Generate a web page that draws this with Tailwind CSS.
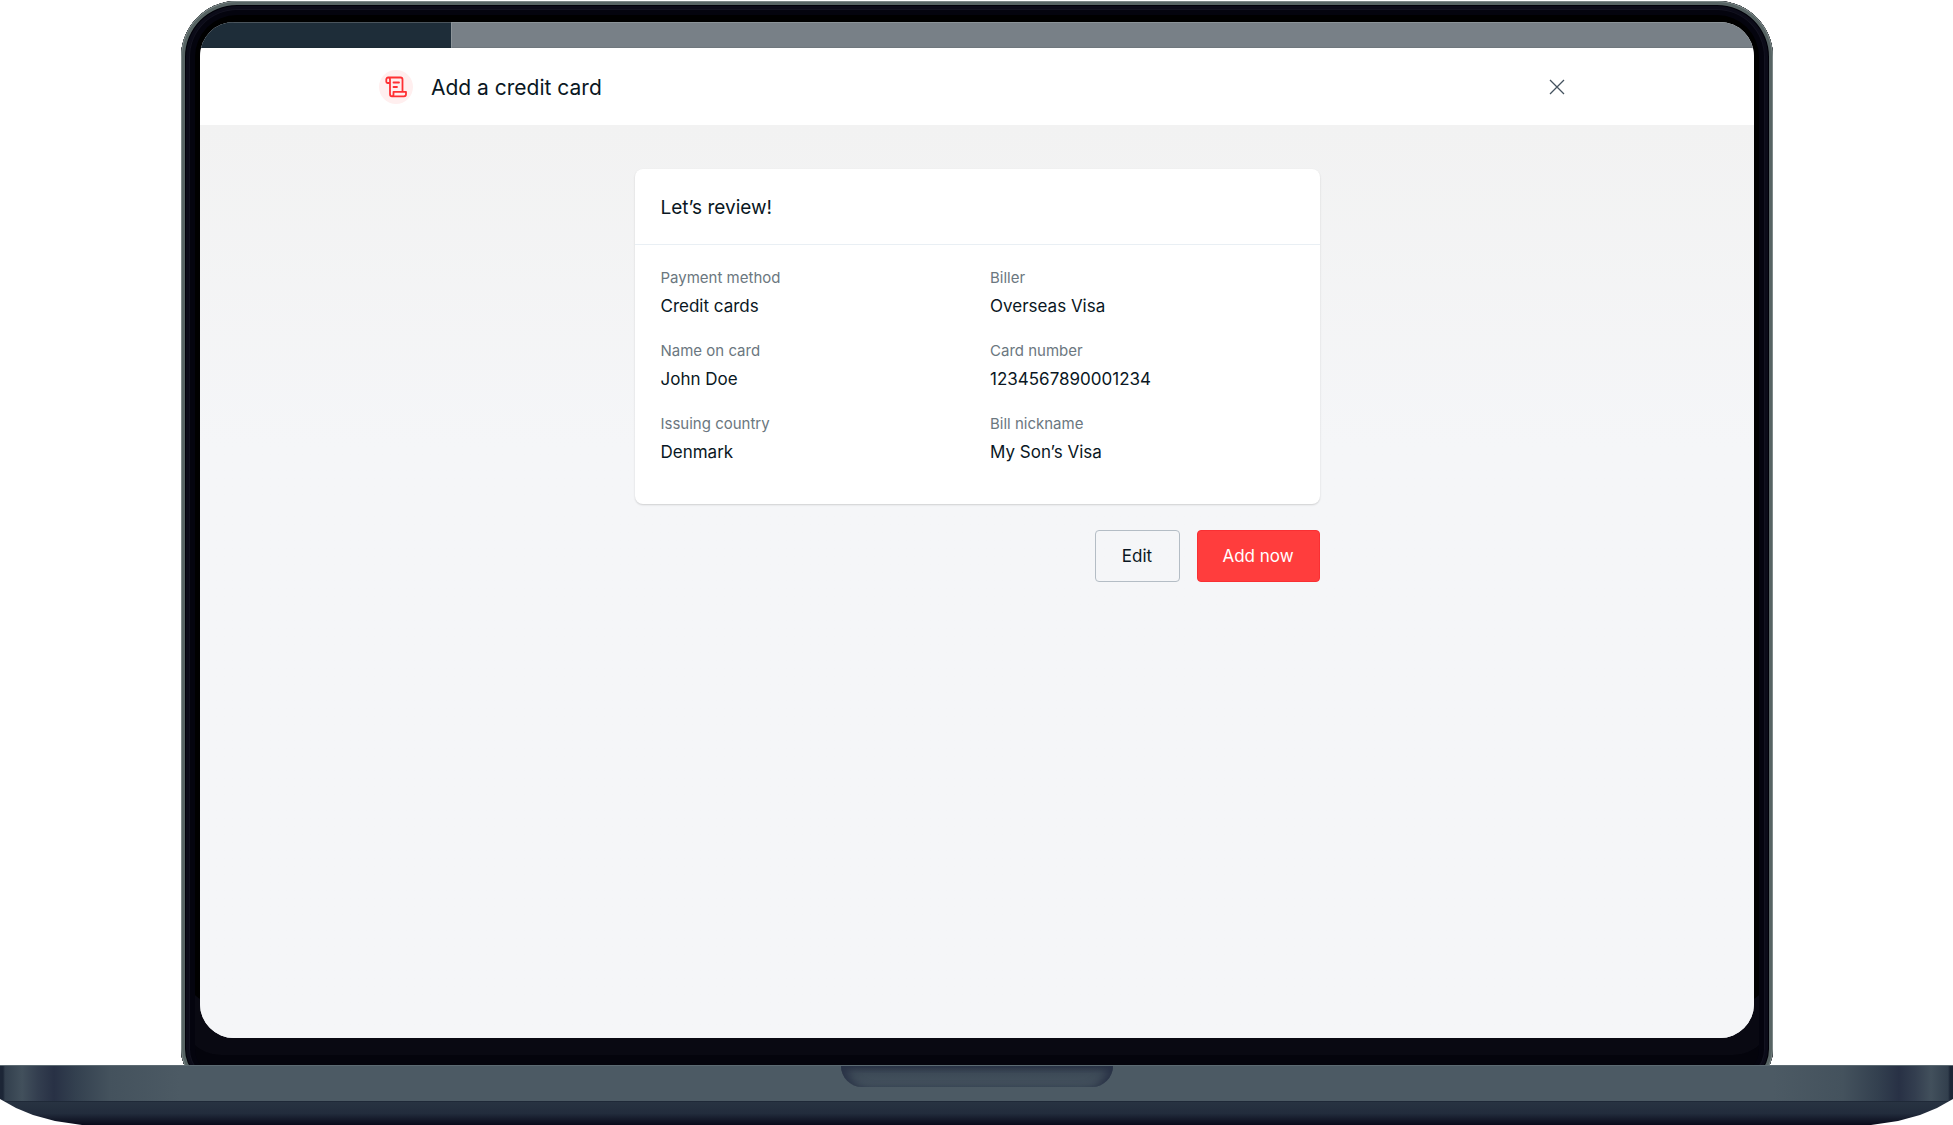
<!DOCTYPE html>
<html lang="en">
<head>
<meta charset="utf-8">
<meta name="viewport" content="width=device-width, initial-scale=1">
<title>Add a credit card</title>
<script src="https://cdn.jsdelivr.net/npm/@tailwindcss/browser@4"></script>
</head>
<body class="flex min-h-screen flex-col bg-white font-['Inter',sans-serif] text-[#0a1723]">
  <!-- Laptop lid; its lower edge is tucked behind the base -->
  <div class="mt-px mr-[180px] ml-[181px] flex flex-1 flex-col rounded-t-[56px] rounded-b-[40px] bg-black px-[19px] pt-[21px] pb-[51px] shadow-[inset_0_0_0_1px_#7d8888,inset_0_0_0_4px_#576464,inset_0_0_0_5px_#000008,inset_0_0_0_8px_#0b0b18,inset_0_0_0_9px_#12121f,inset_0_0_0_14px_#04040e,inset_0_-34px_0_0_#04040c,inset_0_-84px_0_0_#090912]">
    <!-- Screen -->
    <div class="flex flex-1 flex-col overflow-hidden rounded-t-[34px] rounded-b-[34px] bg-[#f5f6f8]">
      <div class="flex h-[26px] bg-[#788087]">
        <div class="w-[251px] border-t border-[#4a545c] bg-[#1e2d39]"></div>
        <div class="flex-1 border-t border-l border-[#8c9499]"></div>
      </div>
      <header class="flex h-[77px] items-center justify-center rounded-t-[4px] bg-white px-6 shadow-[0_1px_3px_#00000026] ring-1 ring-[#0000000a]">
        <div class="flex w-full max-w-[1196px] items-center gap-[18px]">
          <span class="flex size-[34px] items-center justify-center rounded-full bg-[#ffefef]">
            <svg class="size-[22px]" viewBox="0 0 22 22" fill="none" stroke="#ff3033" stroke-width="1.800" stroke-linecap="round" stroke-linejoin="round" aria-hidden="true">
              <path d="M3 1.5H15.500Q17.500 1.500 17.500 3.500V15.500M5 3.500V18Q5 20.300 7 20.300H19Q21 20.300 21 18.300V15.800H8.500V18.300Q8.500 20.300 7 20.300M5 7H2.500Q1.300 7 1.300 5.800V3.500Q1.300 1.500 3.200 1.500Q5 1.500 5 3.500M8.500 6.500H14M8.500 11H12"/>
            </svg>
          </span>
          <h1 class="flex-1 pt-0.5 text-[21px] leading-7">Add a credit card</h1>
          <button type="button" aria-label="Close" class="flex size-9 items-center justify-center">
            <svg class="size-4" viewBox="0 0 16 16" fill="none" stroke="#44525e" stroke-width="1.300" aria-hidden="true"><path d="M1 1L15 15M15 1L1 15"/></svg>
          </button>
        </div>
      </header>
      <main class="flex flex-1 flex-col items-center bg-linear-to-b from-[#f2f2f2] to-[#f5f6f8] to-[320px] px-6 pt-11">
        <section class="w-full max-w-[685px] rounded-lg bg-white shadow-[0_1px_2px_#00000029]">
          <h2 class="border-b border-[#e9eff4] px-[26px] pt-[25px] pb-[23px] text-[19px] leading-[27px]">Let’s review!</h2>
          <dl class="grid grid-cols-2 gap-x-[26px] gap-y-[17px] px-[26px] pt-[19px] pb-[38px]">
            <div><dt class="text-[15px] leading-7 text-[#6b7780]">Payment method</dt><dd class="text-[17px] leading-7">Credit cards</dd></div>
            <div><dt class="text-[15px] leading-7 text-[#6b7780]">Biller</dt><dd class="text-[17px] leading-7">Overseas Visa</dd></div>
            <div><dt class="text-[15px] leading-7 text-[#6b7780]">Name on card</dt><dd class="text-[17px] leading-7">John Doe</dd></div>
            <div><dt class="text-[15px] leading-7 text-[#6b7780]">Card number</dt><dd class="text-[17px] leading-7">1234567890001234</dd></div>
            <div><dt class="text-[15px] leading-7 text-[#6b7780]">Issuing country</dt><dd class="text-[17px] leading-7">Denmark</dd></div>
            <div><dt class="text-[15px] leading-7 text-[#6b7780]">Bill nickname</dt><dd class="text-[17px] leading-7">My Son’s Visa</dd></div>
          </dl>
        </section>
        <div class="flex w-full max-w-[685px] justify-end gap-[17px] pt-[26px]">
          <button type="button" class="h-[52px] w-[85px] rounded-[4px] border border-[#b4bdc5] pt-0.5 text-[17px]">Edit</button>
          <button type="button" class="h-[52px] w-[123px] rounded-[4px] border border-[#f93033] bg-[#ff3d3d] pt-0.5 text-[17px] text-white">Add now</button>
        </div>
      </main>
    </div>
  </div>
  <!-- Laptop base -->
  <div class="-mt-6 flex h-[60px] flex-col [clip-path:polygon(0_0,100%_0,100%_34px,calc(100%-16px)_43px,calc(100%-33px)_50px,calc(100%-55px)_56px,calc(100%-82px)_60px,82px_60px,55px_56px,33px_50px,16px_43px,0_34px)]">
    <div class="flex h-9 justify-center border-t border-[#5c6a72] bg-[linear-gradient(90deg,#1c2636_0,#1c2636_3px,#323f4d_5px,#42505c_22px,#333e4f_38px,#283145_54px,#33404f_75px,#44525d_110px,#4c5a64_180px,#4c5a64_calc(100%-180px),#44525d_calc(100%-110px),#33404f_calc(100%-75px),#283145_calc(100%-54px),#333e4f_calc(100%-38px),#42505c_calc(100%-22px),#323f4d_calc(100%-5px),#1c2636_calc(100%-3px),#1c2636_100%)]">
      <div class="h-[21px] w-[272px] rounded-b-[21px] bg-linear-to-b from-[#2d3647] via-[#3d4a57] via-35% to-[#45535f] shadow-[inset_10px_0_10px_-4px_#293246,inset_-10px_0_10px_-4px_#293246]"></div>
    </div>
    <div class="h-6 border-t border-[#1f2938] bg-linear-to-b from-[#283342] via-[#222c3c] via-50% to-[#090a1a]"></div>
  </div>
</body>
</html>
